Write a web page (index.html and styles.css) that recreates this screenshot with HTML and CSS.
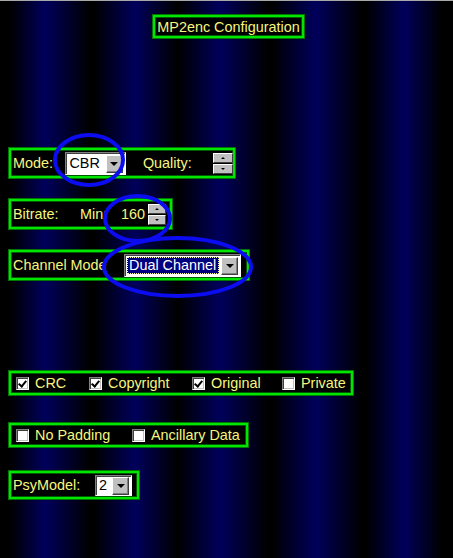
FILE: index.html
```html
<!DOCTYPE html>
<html>
<head>
<meta charset="utf-8">
<link rel="stylesheet" href="styles.css">
</head>
<body>
<div class="page">
  <div class="title-row"><div class="box title">MP2enc Configuration</div></div>

  <div class="box row mode">
    <span class="lbl w-mode">Mode:</span>
    <span class="combo c-cbr"><span class="val">CBR</span><span class="drop"><i class="tri"></i></span></span>
    <span class="lbl w-quality">Quality:</span>
    <span class="spin s-mode"><span class="sbtn"><i class="up"></i></span><span class="sbtn"><i class="dn"></i></span></span>
  </div>

  <div class="box row bitrate">
    <span class="lbl w-bitrate">Bitrate:</span>
    <span class="lbl w-min">Min:</span>
    <span class="lbl">160</span>
    <span class="spin s-bit"><span class="sbtn"><i class="up"></i></span><span class="sbtn"><i class="dn"></i></span></span>
  </div>

  <div class="box row channel">
    <span class="lbl w-channel">Channel Mode</span>
    <span class="combo c-chan"><span class="val sel">Dual Channel</span><span class="drop"><i class="tri"></i></span></span>
  </div>

  <div class="box checks flags">
    <span class="chk w-crc"><span class="cb on"></span>CRC</span>
    <span class="chk w-copy"><span class="cb on"></span>Copyright</span>
    <span class="chk w-orig"><span class="cb on"></span>Original</span>
    <span class="chk"><span class="cb"></span>Private</span>
  </div>

  <div class="box checks padding">
    <span class="chk w-nopad"><span class="cb"></span>No Padding</span>
    <span class="chk"><span class="cb"></span>Ancillary Data</span>
  </div>

  <div class="box row psy">
    <span class="lbl w-psy">PsyModel:</span>
    <span class="combo c-psy"><span class="val">2</span><span class="drop"><i class="tri"></i></span></span>
  </div>

  <svg class="marks" width="453" height="558" viewBox="0 0 453 558">
    <ellipse cx="89" cy="160" rx="34" ry="25"/>
    <ellipse cx="137.5" cy="218.5" rx="32.5" ry="22.5"/>
    <ellipse cx="177.5" cy="267" rx="73.5" ry="29"/>
  </svg>
</div>
</body>
</html>
```

FILE: styles.css
```css
html, body {
  margin: 0;
  padding: 0;
}
html {
  background: #000;
}
body {
  width: 453px;
  height: 558px;
  box-sizing: border-box;
  overflow: hidden;
  border-top: 1px solid #a8a8a8;
  font-family: "Liberation Sans", Arial, sans-serif;
  font-size: 14.4px;
  color: #f6f67e;
  background: linear-gradient(90deg,
    #000 0px, #000 10px, #00005c 45px, #000 90px,
    #000 94px, #00005c 135px, #000 178px,
    #00005c 220px, #000 268px, #000 272px,
    #00005c 316px, #000 362px, #000 366px,
    #00005c 404px, #000 442px, #000 453px);
}
.page {
  position: relative;
  display: flex;
  flex-direction: column;
  align-items: flex-start;
  padding-left: 9px;
  height: 557px;
}
.title-row {
  align-self: stretch;
  display: flex;
  padding-left: 144px;
  margin-top: 14px;
}
.box {
  box-sizing: border-box;
  background: #000;
  border: 2px solid #00e600;
  box-shadow: 0 0 0 1px #007800, inset 0 0 0 1px #005a00;
  display: flex;
  align-items: center;
  white-space: nowrap;
}
.title {
  width: 151px;
  height: 23px;
  justify-content: center;
}
.row {
  height: 30px;
  padding-left: 2px;
}
.mode { width: 226px; margin-top: 110px; }
.bitrate { width: 163px; margin-top: 21px; }
.channel { width: 240px; margin-top: 21px; }
.psy { width: 130px; height: 28px; margin-top: 24px; }
.checks {
  height: 24px;
  padding-left: 5px;
}
.flags { width: 344px; margin-top: 91px; }
.padding { width: 239px; margin-top: 28px; }

.lbl { display: inline-block; }
.w-mode { width: 53px; }
.w-quality { width: 68px; margin-left: 17px; }
.w-bitrate { width: 67px; }
.w-min { width: 41px; }
.w-channel { width: 111px; }
.w-psy { width: 82px; }

.combo {
  box-sizing: border-box;
  height: 23px;
  background: #fff;
  border: 1px solid;
  border-color: #808080 #fff #fff #808080;
  box-shadow: inset 1px 1px 0 #404040;
  display: flex;
  align-items: center;
  padding: 2px 2px 1px 3px;
  color: #000;
}
.c-cbr { width: 61px; }
.c-chan { width: 117px; padding-left: 2px; }
.c-psy { width: 37px; height: 21px; }
.val {
  flex: 1;
  line-height: 17px;
}
.sel {
  background: #000080;
  color: #fff;
  outline: 1px dotted #ffffa0;
  outline-offset: -1px;
  padding-left: 2px;
  margin-right: 2px;
}
.drop {
  box-sizing: border-box;
  width: 17px;
  height: 18px;
  background: #c0c0c0;
  border: 1px solid;
  border-color: #fff #404040 #404040 #fff;
  box-shadow: inset -1px -1px 0 #808080;
  display: flex;
  align-items: center;
  justify-content: center;
}
.tri {
  width: 0;
  height: 0;
  border-left: 4px solid transparent;
  border-right: 4px solid transparent;
  border-top: 4px solid #000;
}

.spin {
  display: flex;
  flex-direction: column;
  gap: 1px;
}
.s-mode { width: 20px; margin-left: 3px; }
.s-bit { width: 18px; margin-left: 3px; }
.sbtn {
  box-sizing: border-box;
  height: 10px;
  background: #c0c0c0;
  border: 1px solid;
  border-color: #fff #404040 #404040 #fff;
  display: flex;
  align-items: center;
  justify-content: center;
}
.up {
  width: 0; height: 0;
  border-left: 2px solid transparent;
  border-right: 2px solid transparent;
  border-bottom: 2px solid #000;
}
.dn {
  width: 0; height: 0;
  border-left: 2px solid transparent;
  border-right: 2px solid transparent;
  border-top: 2px solid #000;
}

.chk {
  display: inline-flex;
  align-items: center;
}
.w-crc { width: 73px; }
.w-copy { width: 103px; }
.w-orig { width: 90px; }
.w-nopad { width: 116px; }
.cb {
  box-sizing: border-box;
  width: 13px;
  height: 13px;
  margin-right: 6px;
  background: #fff;
  border: 1px solid;
  border-color: #808080 #fff #fff #808080;
  box-shadow: inset 1px 1px 0 #404040, inset -1px -1px 0 #c0c0c0;
  position: relative;
}
.cb.on::after {
  content: "";
  position: absolute;
  left: 3px;
  top: 1px;
  width: 3px;
  height: 6px;
  border: solid #000;
  border-width: 0 2px 2px 0;
  transform: rotate(40deg);
}

.marks {
  position: absolute;
  left: 0;
  top: -1px;
  pointer-events: none;
}
.marks ellipse {
  fill: none;
  stroke: #0c0cf0;
  stroke-width: 4;
}
```
